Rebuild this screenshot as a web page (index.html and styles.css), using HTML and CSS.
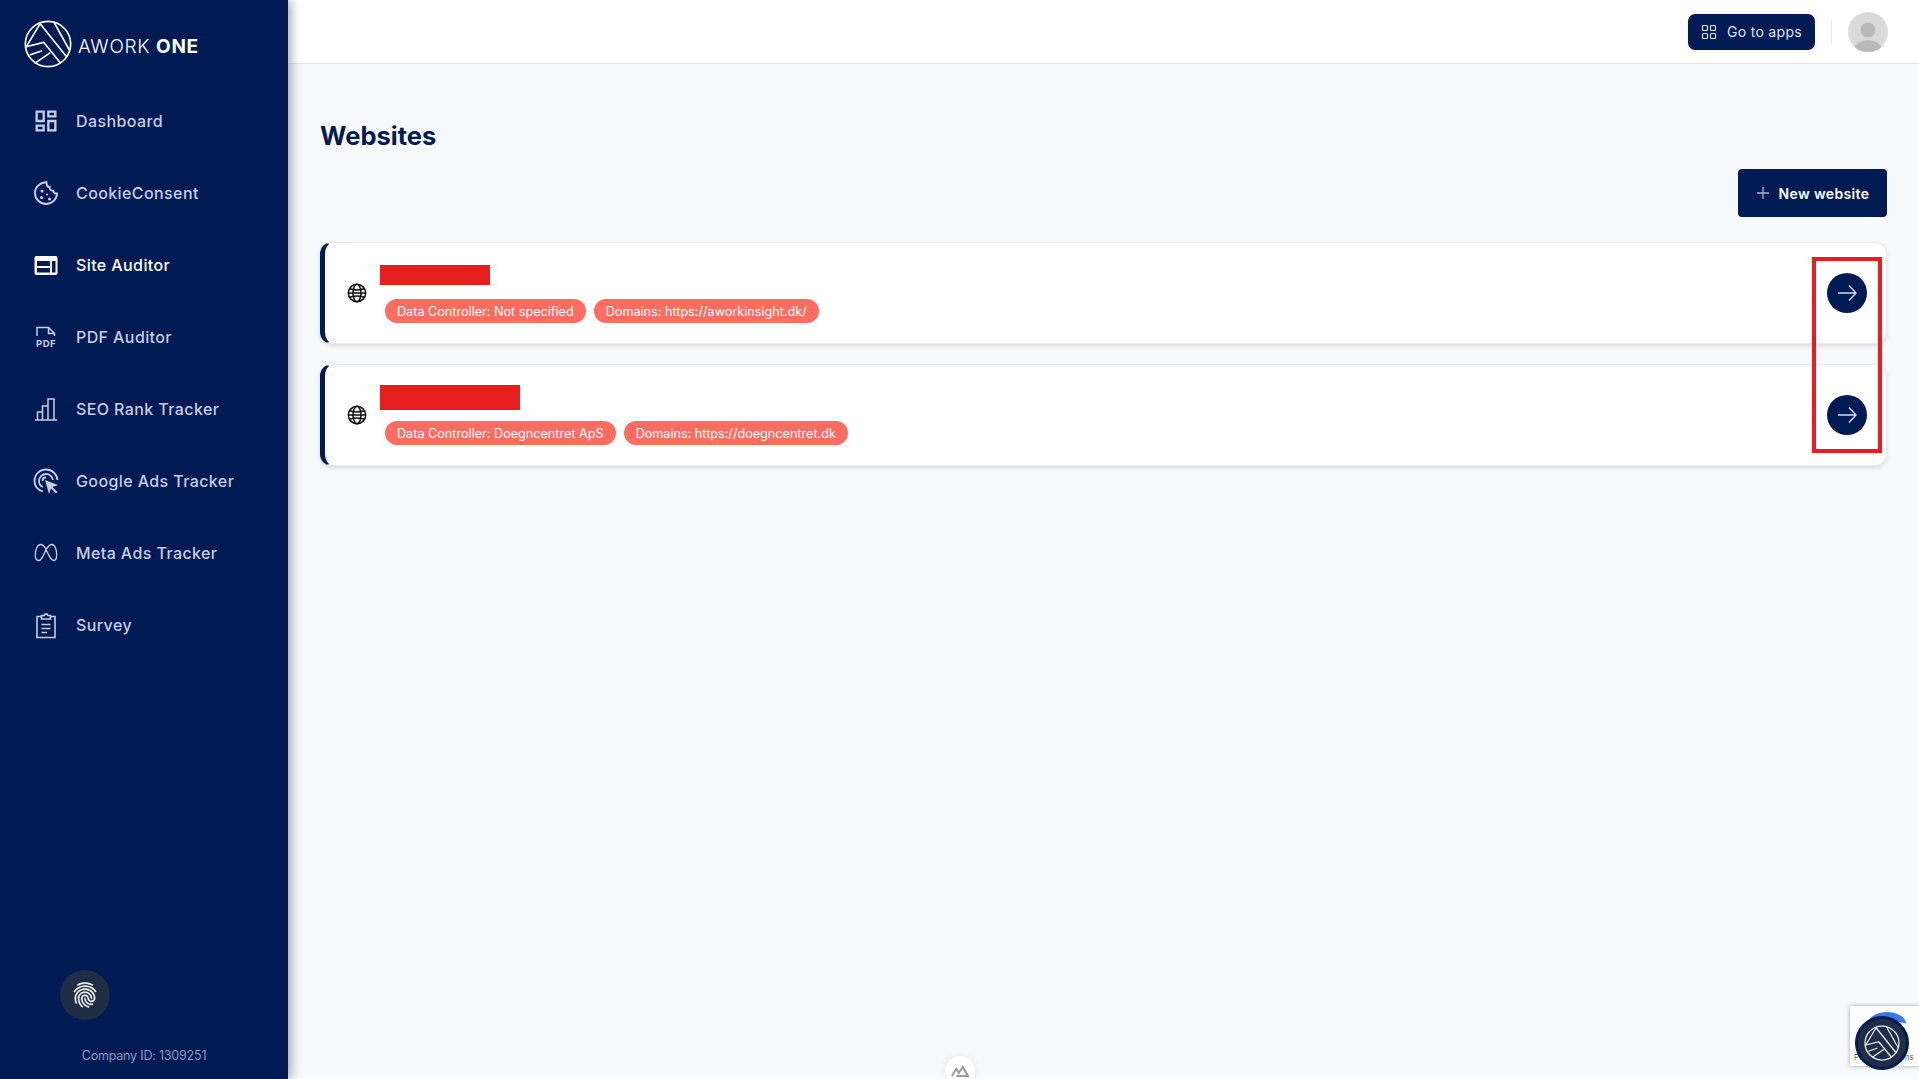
FILE: index.html

```html
<!DOCTYPE html>
<html lang="en">
<head>
    <meta charset="UTF-8">
    <meta name="viewport" content="width=device-width, initial-scale=1.0">
    <title>Websites - Awork One</title>
    <link rel="stylesheet" href="styles.css">
</head>
<body>
    <aside class="sidebar">
        <div class="brand">
            <svg class="brand-logo" viewBox="72 60 142 144" fill="none" stroke="#fff" stroke-width="5">
                <circle cx="143" cy="132" r="68"/>
                <path d="M120 70 L78 140 L130 127 L180 188"/>
                <path d="M120 72 L200 172"/>
                <path d="M160 65 L207 150"/>
                <path d="M88 165 L125 152"/>
                <path d="M103 190 L150 158"/>
            </svg>
            <span class="brand-name">AWORK <b>ONE</b></span>
        </div>
        <nav class="nav">
            <a class="nav-item">
                <svg class="nav-icon" viewBox="0 0 24 24" fill="currentColor"><path d="M19 5v2h-4V5h4M9 5v6H5V5h4m10 8v6h-4v-6h4M9 17v2H5v-2h4M21 3h-8v6h8V3zM11 3H3v10h8V3zm10 8h-8v10h8V11zm-10 4H3v6h8v-6z"/></svg>
                <span>Dashboard</span>
            </a>
            <a class="nav-item">
                <svg class="nav-icon" viewBox="0 0 28 28" fill="none" stroke="currentColor" stroke-width="1.900">
                    <path d="M14.5 3.2C8.500 3 3 8 3 14c0 6.100 5 11 11 11s11-5 11-10.500c-2.200.300-3.500-1-3.700-2.700-2.200.200-3.800-1.300-3.600-3.600-2.200-.300-3.300-2.500-3.200-5z"/>
                    <circle cx="10" cy="12" r="1.500" fill="currentColor" stroke="none"/>
                    <circle cx="9.500" cy="18.500" r="1.500" fill="currentColor" stroke="none"/>
                    <circle cx="15" cy="15.500" r="1.100" fill="currentColor" stroke="none"/>
                    <circle cx="17.500" cy="20" r="1.500" fill="currentColor" stroke="none"/>
                </svg>
                <span>CookieConsent</span>
            </a>
            <a class="nav-item nav-item-active">
                <svg class="nav-icon" viewBox="0 0 28 28">
                    <rect x="2.500" y="5" width="23" height="19" rx="2" fill="#fff"/>
                    <rect x="5" y="10" width="13" height="5" fill="#001b54"/>
                    <rect x="5" y="17" width="13" height="4.500" fill="#001b54"/>
                    <rect x="20" y="10" width="3.500" height="11.500" fill="#001b54"/>
                </svg>
                <span>Site Auditor</span>
            </a>
            <a class="nav-item">
                <svg class="nav-icon" viewBox="0 0 28 28" fill="none" stroke="currentColor" stroke-width="1.500">
                    <path d="M5 13V4.500h11.500l6 6V13"/>
                    <path d="M16.500 4.500v6h6"/>
                    <text class="pdf-mark" x="14" y="24" text-anchor="middle">PDF</text>
                </svg>
                <span>PDF Auditor</span>
            </a>
            <a class="nav-item">
                <svg class="nav-icon" viewBox="0 0 28 28" fill="none" stroke="currentColor" stroke-width="1.500">
                    <path d="M3 25h22"/>
                    <path d="M5.500 25v-8h5v8M10.500 25V11h5.500v14M16 25V4h6v21"/>
                </svg>
                <span>SEO Rank Tracker</span>
            </a>
            <a class="nav-item">
                <svg class="nav-icon" viewBox="0 0 28 28" fill="none" stroke="currentColor" stroke-width="1.800">
                    <path d="M11 24.500C6 23 2.500 19 2.500 14 2.500 7.500 7.500 2.500 14 2.500c6 0 11 4.500 11.500 10.500"/>
                    <path d="M11 20c-2.500-1-4-3.300-4-6 0-3.900 3.100-7 7-7 3.500 0 6.300 2.500 6.900 5.800"/>
                    <path d="M14 10.500c-2 0-3.500 1.500-3.500 3.500" />
                    <path d="M13 13l13 5-5.500 2 5 5-1.500 1.500-5-5-2 5.500z" fill="currentColor" stroke="none"/>
                </svg>
                <span>Google Ads Tracker</span>
            </a>
            <a class="nav-item">
                <svg class="nav-icon" viewBox="0 0 28 28" fill="none" stroke="currentColor" stroke-width="1.500">
                    <path transform="translate(2 0) scale(.857 1)" d="M14 10.500C11.500 6 9.500 5.500 7.500 5.500 4 5.500 1.500 11 1.500 16c0 3.300 1.500 5.500 4 5.500 3 0 5-3.500 8.500-11C17 6.500 19 5.500 21 5.500c3.500 0 5.500 5.500 5.500 10.500 0 3.300-1.500 5.500-3.700 5.500-2.800 0-5-4-8.800-11z"/>
                </svg>
                <span>Meta Ads Tracker</span>
            </a>
            <a class="nav-item">
                <svg class="nav-icon" viewBox="0 0 28 28" fill="none" stroke="currentColor" stroke-width="1.600">
                    <path d="M9.500 5.500H5v21h18v-21h-4.500"/>
                    <path d="M9.500 8V4.500h2.800c.3-2.200 3.200-2.200 3.500 0h2.700V8z"/>
                    <path d="M9.500 13.500h9M9.500 17.500h9M9.500 21.500h5.500"/>
                </svg>
                <span>Survey</span>
            </a>
        </nav>
        <div class="sidebar-footer">
            <button class="fingerprint-btn">
                <svg viewBox="0 0 24 24" fill="#fff" stroke="#fff" stroke-width="0.300" width="30" height="30"><path d="M17.81 4.470c-.08 0-.16-.02-.23-.06C15.660 3.420 14 3 12.010 3c-1.980 0-3.860.47-5.570 1.410-.24.13-.54.04-.68-.2-.13-.24-.04-.55.2-.68C7.820 2.520 9.860 2 12.010 2c2.130 0 3.990.47 6.030 1.520.25.13.34.43.21.67-.09.18-.26.28-.44.28zM3.500 9.720c-.1 0-.2-.03-.29-.09-.23-.16-.28-.47-.12-.7.99-1.400 2.250-2.500 3.750-3.270C9.980 4.040 14 4.030 17.150 5.650c1.500.77 2.760 1.860 3.750 3.250.16.22.11.54-.12.7-.23.16-.54.11-.7-.12-.9-1.260-2.040-2.250-3.390-2.940-2.870-1.470-6.540-1.470-9.400.01-1.360.7-2.500 1.700-3.400 2.960-.08.14-.23.21-.39.21zm6.250 12.070c-.13 0-.26-.05-.35-.15-.87-.87-1.340-1.430-2.010-2.640-.69-1.230-1.050-2.730-1.050-4.340 0-2.970 2.540-5.390 5.660-5.390s5.660 2.420 5.660 5.390c0 .28-.22.5-.5.5s-.5-.22-.5-.5c0-2.420-2.090-4.390-4.660-4.390s-4.660 1.970-4.660 4.390c0 1.440.32 2.770.93 3.850.64 1.150 1.080 1.640 1.850 2.420.19.2.19.51 0 .71-.11.1-.24.15-.37.15zm7.170-1.850c-1.190 0-2.240-.3-3.100-.89-1.490-1.010-2.380-2.650-2.380-4.390 0-.28.22-.5.5-.5s.5.22.5.5c0 1.410.72 2.740 1.940 3.560.71.48 1.540.71 2.540.71.24 0 .64-.03 1.040-.1.27-.05.53.13.58.41.05.27-.13.53-.41.58-.57.11-1.070.12-1.210.12zM14.910 22c-.04 0-.09-.01-.13-.02-1.590-.44-2.630-1.030-3.720-2.100-1.400-1.390-2.170-3.240-2.170-5.220 0-1.620 1.380-2.940 3.080-2.940s3.080 1.320 3.080 2.940c0 1.070.93 1.940 2.080 1.940s2.080-.87 2.080-1.940c0-3.770-3.250-6.830-7.250-6.830-2.840 0-5.440 1.580-6.610 4.030-.39.81-.59 1.760-.59 2.800 0 .78.07 2.010.67 3.610.1.26-.03.55-.29.64-.26.1-.55-.04-.64-.29-.49-1.310-.73-2.610-.73-3.960 0-1.200.23-2.290.68-3.240 1.330-2.790 4.280-4.600 7.510-4.600 4.550 0 8.250 3.510 8.250 7.830 0 1.620-1.380 2.940-3.080 2.940s-3.080-1.320-3.080-2.940c0-1.070-.93-1.940-2.080-1.940s-2.080.87-2.080 1.940c0 1.710.66 3.310 1.870 4.510.95.94 1.860 1.460 3.270 1.850.27.07.42.35.35.61-.05.23-.26.38-.47.38z"/></svg>
            </button>
            <p class="company-id">Company ID: 1309251</p>
        </div>
    </aside>

    <div class="main">
        <header class="topbar">
            <button class="apps-btn">
                <svg viewBox="0 0 16 16" width="16" height="16" fill="none" stroke="currentColor" stroke-width="1.200">
                    <rect x="1.500" y="1.500" width="5" height="5" rx="1"/>
                    <rect x="9.500" y="1.500" width="5" height="5" rx="1"/>
                    <rect x="1.500" y="9.500" width="5" height="5" rx="1"/>
                    <rect x="9.500" y="9.500" width="5" height="5" rx="1"/>
                </svg>
                Go to apps
            </button>
            <span class="topbar-divider"></span>
            <svg class="avatar" viewBox="0 0 40 40">
                <defs><clipPath id="avatar-clip"><circle cx="20" cy="20" r="20"/></clipPath></defs>
                <circle cx="20" cy="20" r="20" fill="#dadada"/>
                <circle cx="20" cy="18" r="7.500" fill="#b9b9b9"/>
                <ellipse cx="20" cy="41" rx="15" ry="13" fill="#b9b9b9" clip-path="url(#avatar-clip)"/>
            </svg>
        </header>

        <main class="content">
            <h1 class="page-title">Websites</h1>
            <div class="toolbar">
                <button class="new-btn">
                    <svg viewBox="0 0 14 14" width="14" height="14" stroke="#aab4cc" stroke-width="1.300"><path d="M7 1v12M1 7h12"/></svg>
                    New website
                </button>
            </div>

            <section class="site-list">
                <article class="site-card">
                    <svg class="globe" viewBox="0 0 20 20" fill="none" stroke="#111" stroke-width="1.500">
                        <circle cx="10" cy="10" r="8.700"/>
                        <ellipse cx="10" cy="10" rx="4" ry="8.700"/>
                        <path d="M2.500 5.800q7.500 2.400 15 0M1.500 10h17M2.500 14.200q7.500-2.400 15 0"/>
                    </svg>
                    <div class="site-body">
                        <div class="redact redact-short"></div>
                        <div class="chips">
                            <span class="chip">Data Controller: Not specified</span>
                            <span class="chip">Domains: https://aworkinsight.dk/</span>
                        </div>
                    </div>
                    <button class="go-btn">
                        <svg viewBox="0 0 20 20" width="20" height="20" fill="none" stroke="#d5daea" stroke-width="1.400"><path d="M1 10h18M12 2.500l7 7.500-7 7.500"/></svg>
                    </button>
                </article>
                <article class="site-card">
                    <svg class="globe" viewBox="0 0 20 20" fill="none" stroke="#111" stroke-width="1.500">
                        <circle cx="10" cy="10" r="8.700"/>
                        <ellipse cx="10" cy="10" rx="4" ry="8.700"/>
                        <path d="M2.500 5.800q7.500 2.400 15 0M1.500 10h17M2.500 14.200q7.500-2.400 15 0"/>
                    </svg>
                    <div class="site-body">
                        <div class="redact redact-long"></div>
                        <div class="chips">
                            <span class="chip">Data Controller: Doegncentret ApS</span>
                            <span class="chip">Domains: https://doegncentret.dk</span>
                        </div>
                    </div>
                    <button class="go-btn">
                        <svg viewBox="0 0 20 20" width="20" height="20" fill="none" stroke="#d5daea" stroke-width="1.400"><path d="M1 10h18M12 2.500l7 7.500-7 7.500"/></svg>
                    </button>
                </article>
            </section>
        </main>
    </div>

    <!-- annotation box from the screenshot -->
    <div class="highlight-box"></div>

    <div class="devtools-tab">
        <svg viewBox="0 0 20 14" width="18" height="13" fill="none" stroke="#9a9a9a" stroke-width="2.200"><path d="M1 13l5-8 3 5M6 13h13L13 3l-5 8"/></svg>
    </div>

    <div class="recaptcha">
        <span class="recaptcha-arc"></span>
        <span class="recaptcha-links">Privacy - Terms</span>
    </div>
    <button class="chat-launcher">
        <svg viewBox="72 60 142 144" width="36" height="36" fill="none" stroke="#e8ecf2" stroke-width="5">
            <circle cx="143" cy="132" r="68"/>
            <path d="M120 70 L78 140 L130 127 L180 188"/>
            <path d="M120 72 L200 172"/>
            <path d="M160 65 L207 150"/>
            <path d="M88 165 L125 152"/>
            <path d="M103 190 L150 158"/>
        </svg>
    </button>
</body>
</html>
```

FILE: styles.css

```css
* {
    box-sizing: border-box;
}

body {
    margin: 0;
    height: 100vh;
    overflow: hidden;
    display: flex;
    background: #f8f9fb;
    font-family: Inter, 'Open Sans', sans-serif;
    color: #001b54;
}

button {
    font-family: inherit;
    border: none;
    cursor: pointer;
}

/* sidebar */
.sidebar {
    position: relative;
    z-index: 2;
    width: 288px;
    flex-shrink: 0;
    display: flex;
    flex-direction: column;
    background: #001b54;
    box-shadow: 3px 0 10px rgba(0, 0, 0, 0.35);
}

.brand {
    height: 85px;
    padding: 20px 0 0 24px;
    display: flex;
    align-items: flex-start;
    gap: 6px;
}

.brand-logo {
    width: 48px;
    height: 48px;
}

.brand-name {
    margin-top: 15px;
    font-size: 19px;
    line-height: 24px;
    font-weight: 300;
    color: #fff;
    letter-spacing: 0.65px;
}

.brand-name b {
    font-weight: 700;
}

.nav-item {
    height: 72px;
    padding-left: 32px;
    display: flex;
    align-items: center;
    gap: 16px;
    font-size: 16px;
    font-weight: 500;
    letter-spacing: 0.4px;
    color: #c6cde2;
}

.nav-item-active {
    color: #fff;
}

.nav-icon {
    width: 28px;
    height: 28px;
    flex-shrink: 0;
}

.pdf-mark {
    font-size: 9.5px;
    font-weight: 700;
    fill: currentColor;
    stroke: none;
}

.sidebar-footer {
    margin-top: auto;
    padding-bottom: 15px;
}

.fingerprint-btn {
    width: 50px;
    height: 50px;
    margin-left: 60px;
    padding: 0;
    display: flex;
    align-items: center;
    justify-content: center;
    border-radius: 50%;
    background: #1f2d45;
}

.company-id {
    margin: 28px 0 0;
    text-align: center;
    font-size: 12.5px;
    line-height: 16px;
    letter-spacing: -0.2px;
    color: #8e9ab8;
}

/* main column */
.main {
    flex: 1;
    min-width: 0;
    display: flex;
    flex-direction: column;
}

.topbar {
    height: 64px;
    padding-right: 31px;
    display: flex;
    align-items: center;
    justify-content: flex-end;
    background: #fff;
    border-bottom: 1px solid #e4e6ea;
}

.apps-btn {
    height: 36px;
    width: 127px;
    display: flex;
    align-items: center;
    justify-content: center;
    gap: 10px;
    border-radius: 7px;
    background: #001b54;
    color: #dfe4f0;
    font-size: 14px;
    letter-spacing: 0.3px;
}

.topbar-divider {
    width: 1px;
    height: 24px;
    margin: 0 16px;
    background: #e6e6e6;
}

.avatar {
    width: 40px;
    height: 40px;
}

.content {
    flex: 1;
    padding: 56px 32px 0;
}

.page-title {
    margin: 0 0 17px;
    font-size: 25.5px;
    line-height: 32px;
    font-weight: 700;
}

.toolbar {
    display: flex;
    justify-content: flex-end;
    margin-bottom: 25px;
}

.new-btn {
    width: 149px;
    height: 48px;
    display: flex;
    align-items: center;
    justify-content: center;
    gap: 9px;
    padding-bottom: 1px;
    border-radius: 4px;
    background: #001b54;
    color: #fff;
    font-size: 14px;
    font-weight: 600;
    letter-spacing: 0.35px;
}

.site-list {
    display: flex;
    flex-direction: column;
    gap: 20px;
}

.site-card {
    height: 102px;
    padding: 0 19px 0 22px;
    display: flex;
    align-items: center;
    background: #fff;
    border: 1px solid #e9ebf0;
    border-left: 5px solid #001b54;
    border-radius: 12px;
    box-shadow: 0 2px 4px rgba(0, 0, 0, 0.12);
}

.globe {
    width: 20px;
    height: 20px;
    flex-shrink: 0;
}

.site-body {
    flex: 1;
    margin-left: 13px;
}

.redact {
    background: #e81e1e;
}

.redact-short {
    width: 110px;
    height: 20px;
    margin-top: 2px;
    margin-bottom: 14px;
}

.redact-long {
    width: 140px;
    height: 25px;
    margin-bottom: 11px;
}

.chips {
    display: flex;
    gap: 8px;
    padding-left: 5px;
}

.chip {
    height: 24px;
    padding: 0 12px;
    display: flex;
    align-items: center;
    border-radius: 12px;
    background: #ff6d60;
    color: #fff;
    font-size: 12.6px;
    letter-spacing: 0.02px;
    white-space: nowrap;
}

.go-btn {
    width: 40px;
    height: 40px;
    padding: 0;
    display: flex;
    align-items: center;
    justify-content: center;
    border-radius: 50%;
    background: #001b54;
}

/* overlays */
.highlight-box {
    position: absolute;
    left: 1812px;
    top: 257px;
    width: 70px;
    height: 196px;
    border: 4px solid #e81e1e;
}

.devtools-tab {
    position: absolute;
    left: 945px;
    top: 1056px;
    width: 30px;
    height: 30px;
    padding-top: 8px;
    display: flex;
    justify-content: center;
    border-radius: 50%;
    background: #fff;
    box-shadow: 0 0 6px rgba(0, 0, 0, 0.1);
}

.recaptcha {
    position: absolute;
    left: 1850px;
    top: 1006px;
    width: 69px;
    height: 60px;
    background: #fff;
    border-radius: 2px 0 0 2px;
    box-shadow: 0 0 4px rgba(0, 0, 0, 0.35);
}

.recaptcha-arc {
    position: absolute;
    left: 18px;
    top: 6px;
    width: 38px;
    height: 24px;
    border-top: 10px solid #3a78e6;
    border-radius: 50% 50% 0 0;
}

.recaptcha-links {
    position: absolute;
    left: 4px;
    bottom: 4px;
    font-size: 8px;
    color: #666;
    white-space: nowrap;
}

.chat-launcher {
    position: absolute;
    left: 1855px;
    top: 1016px;
    width: 54px;
    height: 54px;
    padding: 0;
    display: flex;
    align-items: center;
    justify-content: center;
    border: 3px solid #001b54;
    border-radius: 50%;
    background: #1f2d45;
}
```
